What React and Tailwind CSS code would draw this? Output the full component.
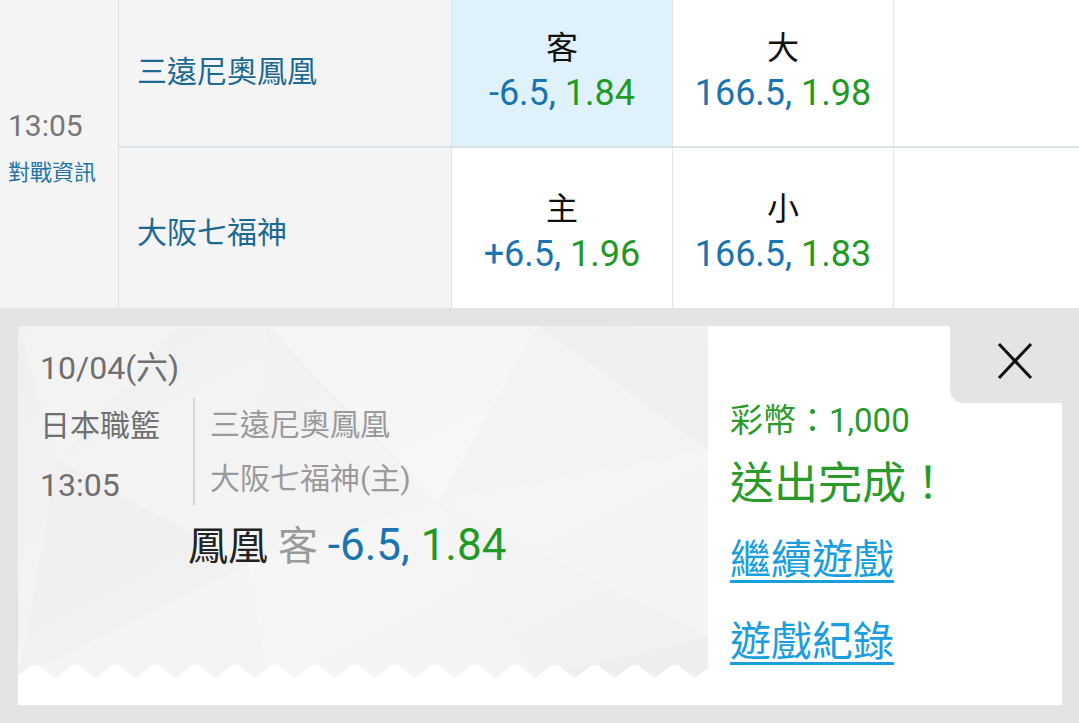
import React from 'react';

const FONT = { fontFamily: 'Roboto, "Noto Sans CJK TC", sans-serif' };

function Odds({ label, line, price, active, pad }) {
  return (
    <div className={`w-[221px] flex flex-col items-center justify-center border-r border-[#e3e6e9] ${pad} ${active ? 'bg-[#dff2fc]' : 'bg-white'}`}>
      <div className="text-[32px] leading-[40px] text-[#111]">{label}</div>
      <div className="text-[36px] leading-[44px] mt-[3px]">
        <span className="text-[#1a74b0]">{line}, </span>
        <span className="text-[#1f9a25]">{price}</span>
      </div>
    </div>
  );
}

function Row({ team, odds1, odds2, className, pad }) {
  return (
    <div className={`flex ${className}`}>
      <div className={`w-[333px] bg-[#f4f4f4] border-r border-[#e0e3e6] flex items-center pl-[18px] text-[30px] text-[#1c6a94] ${pad}`}>
        {team}
      </div>
      <Odds {...odds1} pad={pad} />
      <Odds {...odds2} pad={pad} />
      <div className="flex-1 bg-white" />
    </div>
  );
}

function Backdrop() {
  return (
    <svg className="absolute inset-0 w-full h-full" viewBox="0 0 690 340" preserveAspectRatio="none">
      <polygon points="0,0 160,0 40,130" fill="#ffffff" opacity="0.2" />
      <polygon points="250,0 520,0 420,170" fill="#ffffff" opacity="0.3" />
      <polygon points="520,0 690,0 690,120" fill="#e9e9e9" opacity="0.35" />
      <polygon points="420,170 690,120 690,300" fill="#ffffff" opacity="0.2" />
      <polygon points="40,130 230,230 0,340" fill="#ececec" opacity="0.3" />
      <polygon points="230,230 420,170 520,340 250,340" fill="#ffffff" opacity="0.2" />
      <polygon points="520,340 690,300 690,340" fill="#e9e9e9" opacity="0.35" />
      <polygon points="40,130 250,0 230,230" fill="#f9f9f9" opacity="0.25" />
    </svg>
  );
}

export default function App() {
  return (
    <div className="w-[1079px] h-[723px] bg-[#e4e4e4] overflow-hidden flex flex-col" style={FONT}>
      {/* 賽事表格 */}
      <div className="h-[308px] flex">
        <div className="w-[119px] bg-[#f4f4f4] border-r border-[#dcdfe2] flex flex-col justify-center pl-[8px] pb-[12px]">
          <div className="text-[30px] leading-[36px] text-[#777]">13:05</div>
          <div className="text-[22px] leading-[30px] text-[#2574a9] mt-[14px]">對戰資訊</div>
        </div>
        <div className="flex-1 flex flex-col">
          <Row
            className="h-[148px] border-b-2 border-[#dbe3ea]"
            pad="pb-[4px]"
            team="三遠尼奧鳳凰"
            odds1={{ label: '客', line: '-6.5', price: '1.84', active: true }}
            odds2={{ label: '大', line: '166.5', price: '1.98' }}
          />
          <Row
            className="flex-1"
            pad="pt-[8px]"
            team="大阪七福神"
            odds1={{ label: '主', line: '+6.5', price: '1.96' }}
            odds2={{ label: '小', line: '166.5', price: '1.83' }}
          />
        </div>
      </div>

      {/* 投注結果 */}
      <div className="flex-1 pt-[18px] pl-[18px] pr-[17px] pb-[18px]">
        <div className="h-full flex">
          <div className="w-[690px] flex flex-col bg-white">
            <div className="relative flex-1 bg-gradient-to-br from-[#efefef] via-[#f4f4f4] to-[#f1f1f1] overflow-hidden">
              <Backdrop />
              <div className="relative pl-[22px] pt-[22px]">
                <div className="text-[32px] leading-[40px] text-[#6f6f6f]">10/04(六)</div>
                <div className="flex mt-[10px]">
                  <div className="w-[153px] flex flex-col text-[#6f6f6f]">
                    <div className="h-[54px] flex items-center text-[30px]">日本職籃</div>
                    <div className="h-[66px] flex items-center text-[32px]">13:05</div>
                  </div>
                  <div className="border-l-2 border-[#d6d6d6] h-[107px] pl-[15px] flex flex-col text-[30px] text-[#9a9a9a]">
                    <div className="h-[54px] flex items-center">三遠尼奧鳳凰</div>
                    <div className="h-[54px] flex items-center">大阪七福神(主)</div>
                  </div>
                </div>
                <div className="ml-[148px] mt-[2px] text-[40px] leading-[50px] whitespace-nowrap">
                  <span className="text-[#222]">鳳凰 </span>
                  <span className="text-[#9a9a9a]">客 </span>
                  <span className="text-[#1a74b0] text-[44px]">-6.5, </span>
                  <span className="text-[#1f9a25] text-[44px]">1.84</span>
                </div>
              </div>
            </div>
            <svg className="block w-full h-[15px] -mt-[15px] relative" viewBox="0 0 690 15" preserveAspectRatio="none">
              <defs>
                <pattern id="zig" x="-3" y="0" width="40" height="15" patternUnits="userSpaceOnUse">
                  <path d="M0,15 L16,3 Q20,0 24,3 L40,15 Z" fill="#ffffff" />
                </pattern>
              </defs>
              <rect width="690" height="15" fill="url(#zig)" />
            </svg>
            <div className="h-[27px] bg-white" />
          </div>

          <div className="flex-1 bg-white flex flex-col">
            <div className="flex justify-end">
              <div className="w-[112px] h-[77px] bg-[#e4e4e4] rounded-bl-[14px] pl-[47px] pt-[16px]">
                <svg width="36" height="38" viewBox="0 0 36 38">
                  <path d="M2 2 L34 36 M34 2 L2 36" stroke="#111" strokeWidth="3" fill="none" />
                </svg>
              </div>
            </div>
            <div className="pl-[22px] flex flex-col items-start">
              <div className="text-[33px] leading-[36px] text-[#2a9a2a]">彩幣：1,000</div>
              <div className="text-[44px] leading-[50px] text-[#2a9a2a] mt-[20px]">送出完成！</div>
              <a href="#" className="text-[41px] leading-[50px] text-[#1b9ee0] underline decoration-[3px] underline-offset-[6px] mt-[26px]">繼續遊戲</a>
              <a href="#" className="text-[41px] leading-[50px] text-[#1b9ee0] underline decoration-[3px] underline-offset-[6px] mt-[32px]">遊戲紀錄</a>
            </div>
          </div>
        </div>
      </div>
    </div>
  );
}
